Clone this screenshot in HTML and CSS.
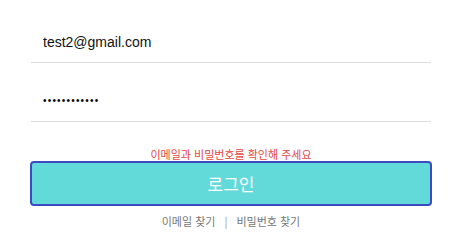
FILE: index.html
```html
<!DOCTYPE html>
<html lang="ko">
<head>
  <meta charset="UTF-8" />
  <meta name="viewport" content="width=device-width, initial-scale=1.0" />
  <title>로그인</title>
  <link rel="stylesheet" href="styles.css">
</head>
<body>
  <form class="login-form">
    <input class="field" type="email" value="test2@gmail.com">
    <input class="field field-pw" type="password" value="abcdefghijkl">
    <p class="error">이메일과 비밀번호를 확인해 주세요</p>
    <button class="login-btn" type="button">로그인</button>
    <div class="find-links">
      <a href="#">이메일 찾기</a>
      <span class="divider">|</span>
      <a href="#">비밀번호 찾기</a>
    </div>
  </form>
</body>
</html>
```

FILE: styles.css
```css
body {
  margin: 0;
  background: #fff;
  font-family: 'Liberation Sans', 'Noto Sans CJK KR', sans-serif;
}
.login-form {
  width: 400px;
  padding: 21px 0 0 31px;
}
.field {
  display: block;
  width: 100%;
  height: 42px;
  box-sizing: border-box;
  margin: 0;
  padding: 0 12px;
  border: none;
  border-bottom: 1px solid #dddddd;
  outline: none;
  font-family: 'Liberation Sans', sans-serif;
  font-size: 14px;
  color: #111;
  background: transparent;
}
.field-pw {
  margin-top: 17px;
  font-size: 10px;
  letter-spacing: 1.2px;
  color: #000;
}
.error {
  margin: 26px 0 0;
  height: 13px;
  line-height: 13px;
  text-align: center;
  font-family: 'Noto Sans CJK KR', sans-serif;
  font-size: 11px;
  color: #e5483f;
}
.login-btn {
  display: block;
  width: 402px;
  height: 45px;
  margin: 0 0 0 -1px;
  box-sizing: border-box;
  border: 2px solid #3b4bc3;
  border-radius: 4px;
  background: #63dada;
  color: #fff;
  font-family: 'Noto Sans CJK KR', sans-serif;
  font-size: 17px;
  cursor: pointer;
}
.find-links {
  margin-top: 7px;
  display: flex;
  justify-content: center;
  gap: 9px;
  line-height: 16px;
  font-family: 'Noto Sans CJK KR', sans-serif;
  font-size: 11px;
}
.find-links a {
  color: #777;
  text-decoration: none;
}
.divider {
  color: #999;
}
```
